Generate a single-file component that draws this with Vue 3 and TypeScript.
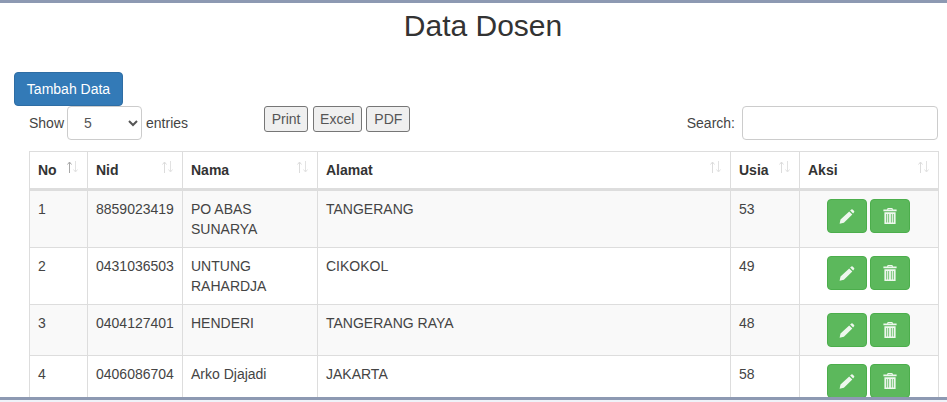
<script setup lang="ts">
interface Dosen {
  no: number;
  nid: string;
  nama: string;
  alamat: string;
  usia: number;
}

const columns = [
  { label: "No", width: 58 },
  { label: "Nid", width: 95 },
  { label: "Nama", width: 135 },
  { label: "Alamat", width: 413 },
  { label: "Usia", width: 69 },
  { label: "Aksi", width: 139 },
];

const rows: Dosen[] = [
  { no: 1, nid: "8859023419", nama: "PO ABAS SUNARYA", alamat: "TANGERANG", usia: 53 },
  { no: 2, nid: "0431036503", nama: "UNTUNG RAHARDJA", alamat: "CIKOKOL", usia: 49 },
  { no: 3, nid: "0404127401", nama: "HENDERI", alamat: "TANGERANG RAYA", usia: 48 },
  { no: 4, nid: "0406086704", nama: "Arko Djajadi", alamat: "JAKARTA", usia: 58 },
];
</script>

<template>
  <div class="page">
    <h1>Data Dosen</h1>
    <button type="button" class="btn-add">Tambah Data</button>

    <div class="wrapper">
      <div class="toolbar">
        <label class="length">
          Show
          <select>
            <option>5</option>
          </select>
          entries
        </label>
        <div class="exports">
          <button type="button">Print</button>
          <button type="button">Excel</button>
          <button type="button">PDF</button>
        </div>
        <label class="search">
          Search:
          <input type="search" />
        </label>
      </div>

      <table>
        <colgroup>
          <col v-for="col in columns" :key="col.label" :style="{ width: col.width + 'px' }" />
        </colgroup>
        <thead>
          <tr>
            <th v-for="(col, i) in columns" :key="col.label">
              {{ col.label }}
              <svg class="sort" :class="{ active: i === 0 }" width="13" height="14" viewBox="0 0 13 14" fill="none">
                <path class="up" d="M3.5 13V2M1.5 4.500 3.500 2l2 2.500" />
                <path class="down" d="M9.500 1v11M7.500 9.500l2 2.500 2-2.500" />
              </svg>
            </th>
          </tr>
        </thead>
        <tbody>
          <tr v-for="row in rows" :key="row.no">
            <td>{{ row.no }}</td>
            <td>{{ row.nid }}</td>
            <td>{{ row.nama }}</td>
            <td>{{ row.alamat }}</td>
            <td>{{ row.usia }}</td>
            <td class="aksi">
              <button type="button" class="btn-green" aria-label="Edit">
                <svg width="16" height="15" viewBox="0 0 16 15" fill="#eef7ee">
                  <path d="M.6 14.800 1.500 10.600 10.200 2.400 13.300 5.500 4.900 13.700zM11.100 1.600 12.400.4Q13 0 13.600.5L15.100 2Q15.600 2.600 15.100 3.200L14.100 4.600z" />
                </svg>
              </button>
              <button type="button" class="btn-green" aria-label="Hapus">
                <svg width="14" height="16" viewBox="0 0 14 16" fill="#eef7ee">
                  <path fill-rule="evenodd" d="M4.600 0H9.400L9.900 1.500H13.600V3.300H.4V1.500H4.100zM5.400 1H8.600L8.800 1.500H5.200zM1.400 4.300H12.600V16H1.400zM3.300 6V14.500H4.100V6zM5.300 6V14.500H6.100V6zM7.900 6V14.500H8.700V6zM9.900 6V14.500H10.700V6z" />
                </svg>
              </button>
            </td>
          </tr>
        </tbody>
      </table>
    </div>

    <div class="bottom-bar"></div>
  </div>
</template>

<style>
html,
body {
  margin: 0;
  background: #fff;
  overflow: hidden;
}
</style>

<style scoped>
.page {
  position: relative;
  box-sizing: border-box;
  height: 402px;
  overflow: hidden;
  border-top: 3px solid #8d99b2;
  padding-left: 14px;
  font-family: "Liberation Sans", Arial, sans-serif;
  font-size: 14px;
  line-height: 20px;
  color: #333;
}

h1 {
  margin: 6px 0 0;
  padding-left: 5px;
  height: 63px;
  box-sizing: border-box;
  text-align: center;
  font-size: 30px;
  font-weight: 400;
  line-height: 33px;
}

.btn-add {
  display: block;
  box-sizing: border-box;
  width: 109px;
  height: 34px;
  border: 1px solid #2e6da4;
  border-radius: 4px;
  background: #337ab7;
  color: #fff;
  font: inherit;
  padding: 0;
}

.wrapper {
  padding-left: 15px;
  width: 909px;
}

.toolbar {
  display: flex;
  align-items: flex-start;
  height: 45px;
  color: #444;
}

.length {
  display: flex;
  align-items: center;
  gap: 3px;
  height: 34px;
}

select {
  box-sizing: border-box;
  width: 75px;
  height: 34px;
  margin-right: 1px;
  border: 1px solid #ccc;
  border-radius: 4px;
  background: #fff;
  color: #555;
  font: inherit;
  padding: 0 12px;
}

.exports {
  display: flex;
  gap: 4.500px;
  margin-left: 76px;
}

.exports button {
  box-sizing: border-box;
  min-width: 44px;
  height: 26px;
  border: 1px solid #767676;
  border-radius: 3px;
  background: #efefef;
  color: #555;
  font: inherit;
  padding: 0 6.500px;
}

.search {
  display: flex;
  align-items: center;
  gap: 7px;
  height: 34px;
  margin-left: auto;
}

input {
  box-sizing: border-box;
  width: 196px;
  height: 34px;
  border: 1px solid #ccc;
  border-radius: 4px;
  background: #fff;
}

table {
  table-layout: fixed;
  width: 909px;
  border-collapse: collapse;
  background: #fff;
}

th,
td {
  border: 1px solid #ddd;
  padding: 8px;
  text-align: left;
  vertical-align: top;
}

td {
  color: #444;
}

th {
  position: relative;
  font-weight: 700;
  border-bottom-width: 3px;
}

.sort {
  position: absolute;
  top: 8px;
  right: 8px;
  stroke-width: 1;
}

.sort .up {
  stroke: #dcdcdc;
}

.sort .down {
  stroke: #e2e2e2;
}

.sort.active .up {
  stroke: #a8a8a8;
}

tbody tr:nth-child(odd) {
  background: #f9f9f9;
}

.aksi {
  text-align: center;
  font-size: 0;
  padding-right: 9px;
}

.btn-green {
  box-sizing: border-box;
  display: inline-flex;
  align-items: center;
  justify-content: center;
  vertical-align: top;
  width: 40px;
  height: 34px;
  margin: 0 1.500px;
  padding: 0;
  border: 1px solid #4cae4c;
  border-radius: 4px;
  background: #5cb85c;
}

.bottom-bar {
  position: absolute;
  left: 0;
  right: 0;
  bottom: 0;
  height: 3px;
  border-bottom: 2px solid #eff3f9;
  background: #8d99b2;
}
</style>
